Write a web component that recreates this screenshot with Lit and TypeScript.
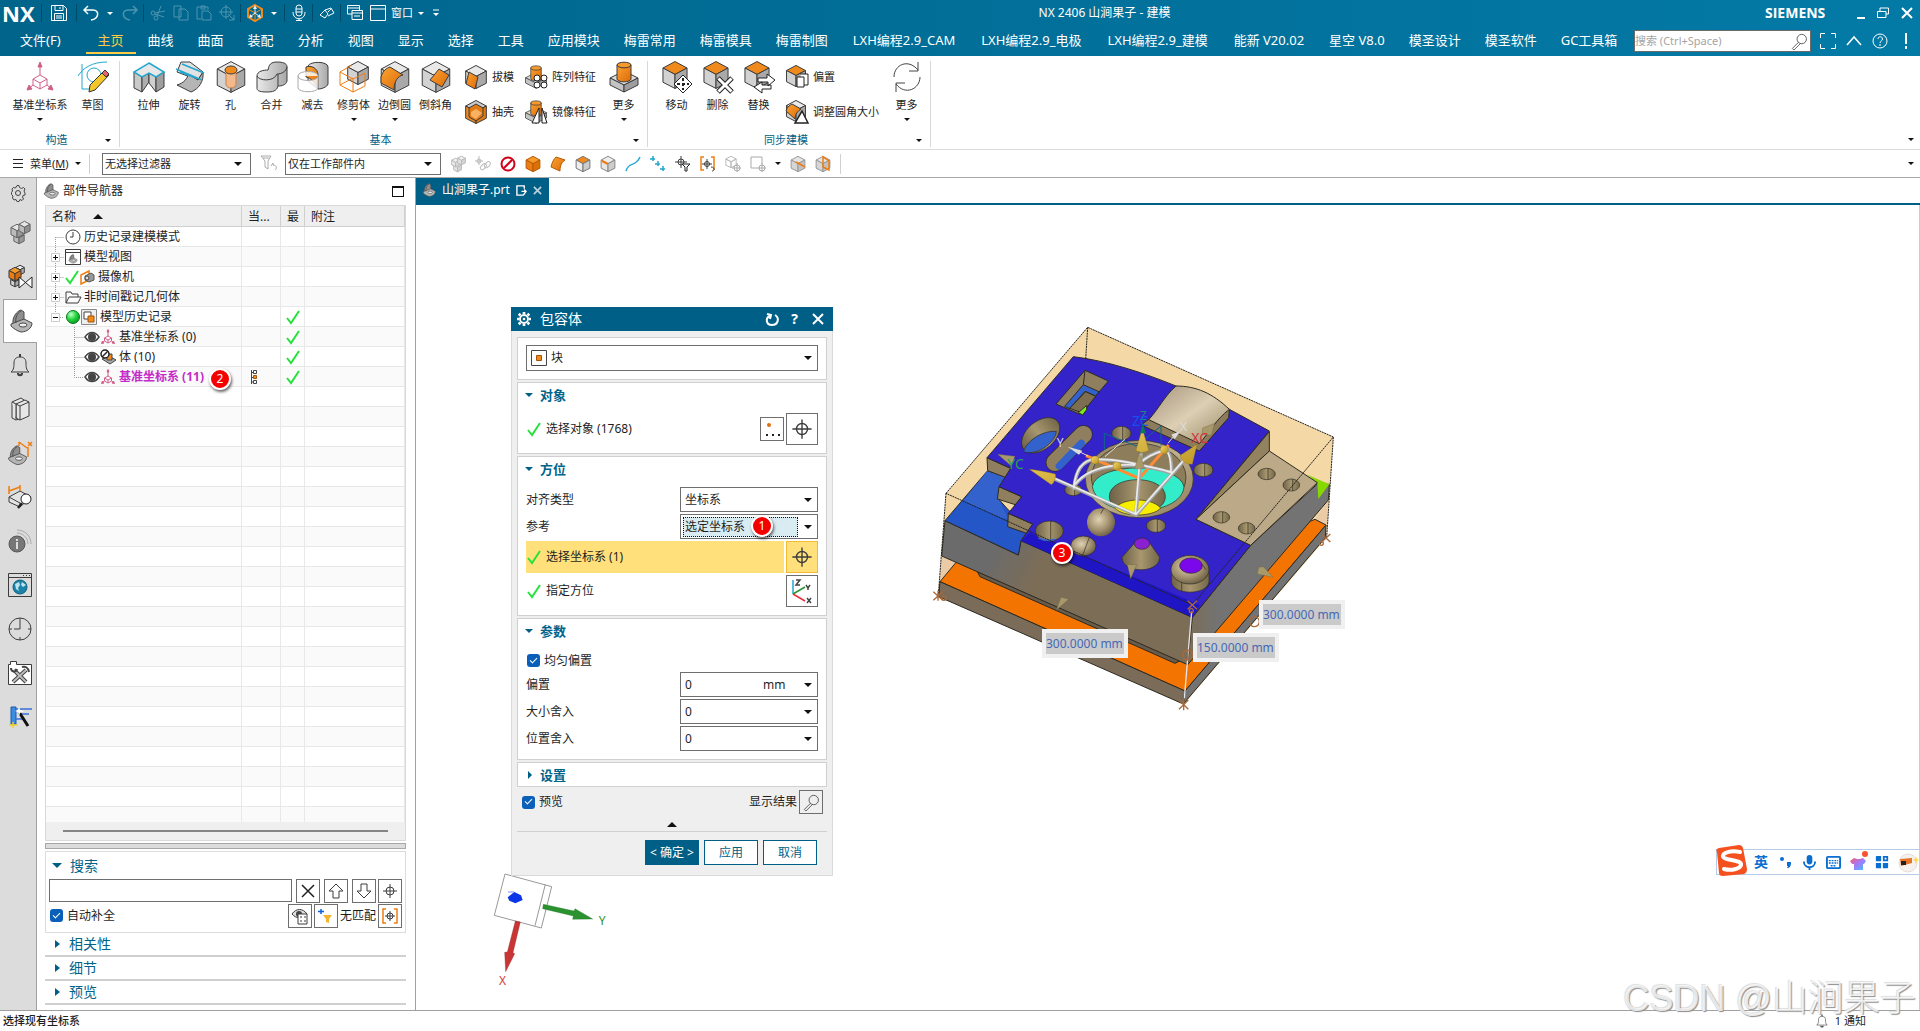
import { LitElement, html, svg, css, nothing } from "lit";
import { customElement } from "lit/decorators.js";
import { classMap } from "lit/directives/class-map.js";

const INK = "#3c3c3c";
const OR = "url(#orange)";
const GR = "url(#grey)";

/** Isometric cube in a box of side s whose top-left corner is x, y. */
const cube = (x: number, y: number, s: number, top = "#e9e9e9", left = "#d2d2d2", right = "#a9a9a9", line = INK) => {
  const p = (a: number, b: number) => `${x + a * s},${y + b * s}`;
  return svg`<g stroke=${line} stroke-linejoin="round">
    <polygon fill=${top} points="${p(0.5, 0.02)} ${p(0.93, 0.25)} ${p(0.5, 0.48)} ${p(0.07, 0.25)}"/>
    <polygon fill=${left} points="${p(0.07, 0.25)} ${p(0.5, 0.48)} ${p(0.5, 0.98)} ${p(0.07, 0.76)}"/>
    <polygon fill=${right} points="${p(0.93, 0.25)} ${p(0.5, 0.48)} ${p(0.5, 0.98)} ${p(0.93, 0.76)}"/></g>`;
};
const ico = (size: number, body: unknown, box = size) =>
  html`<svg class="ico" width=${size} height=${size} viewBox="0 0 ${box} ${box}" fill="none" aria-hidden="true">${body}</svg>`;

const csys = svg`<g stroke="#d0608a" fill="none"><path d="M16 4V14M16 14l7 4v6l-7 4-7-4v-6zM9 18l7 4 7-4M16 22v6M9 24l-5 4M23 24l5 4"/><path fill="#d0608a" d="M16 1l2 5h-4zM3 29l2-5 3 4zM29 29l-2-5-3 4z"/></g>`;
const part = svg`<g stroke="#4a4a4a" stroke-linejoin="round"><path fill="#8f8f8f" d="M4 15C3 8 8 2 12 1l3 2v8l-6 8z"/><path fill="#b5b5b5" d="M2 15l13-5 8 4c0 5-5 9-11 9-4-1-8-4-10-6z"/><ellipse cx="14" cy="16" rx="4" ry="2" fill="#efefef"/><path d="M12 2c-4 2-6 7-5 12"/></g>`;
const target = svg`<g stroke=${INK}><circle cx="8" cy="8" r="4"/><path d="M8 1v14M1 8h14"/></g>`;
const cyl = (x: number, y: number, w: number, h: number) => svg`<g stroke=${INK}><path fill=${OR} d="M${x} ${y}v${h}a${w / 2} ${w / 5} 0 0 0 ${w} 0v-${h}z"/><ellipse fill="#f79a2a" cx=${x + w / 2} cy=${y} rx=${w / 2} ry=${w / 5}/></g>`;
const post = svg`<g stroke=${INK} stroke-linejoin="round"><path fill="#dadada" d="M2 17l14-7 14 7-14 7z"/><path fill="#c4c4c4" d="M2 17l14 7v7L2 24z"/><path fill="#9e9e9e" d="M30 17l-14 7v7l14-7z"/></g>${cyl(9, 4, 14, 14)}`;
const lens = svg`<g stroke=${INK}><circle cx="15" cy="9" r="6"/><path d="M11 13l-8 8 2 2 8-8"/></g>`;
const bell = svg`<g stroke=${INK}><path d="M3 19c3-2 3-6 3-9 0-4 2-6 6-6s6 2 6 6c0 3 0 7 3 9z"/><path d="M10 20c0 3 4 3 4 0M12 1v3" stroke-width="2"/></g>`;

const big: Record<string, unknown> = {
  csys,
  sketch: svg`<g stroke="#22a7cf"><path d="M5 3v25M5 28h14M1 15C6 7 15 1 30 1"/><circle cx="17" cy="14" r="7"/></g><path fill="#f3c62b" stroke="#333" d="M12 31l1-7L27 10l5 4-14 15z"/><path fill="#e8636b" stroke="#333" d="M25 12l3-3 4 4-3 3z"/>`,
  extrude: svg`<g stroke=${INK} stroke-linejoin="round"><path fill="#c9c9c9" d="M1 11l8 5v15l-8-4z"/><path fill="#aeaeae" d="M9 16l7-4v9l-7 10z"/><path fill="#cfcfcf" d="M16 12l7 4v15l-7-9z"/><path fill="#9f9f9f" d="M23 16l8-5v15l-8 5z"/></g><path fill="#e8e8e8" stroke="#22a7cf" stroke-width="1.5" d="M16 2l15 9-8 5-7-4-7 4-8-5z"/>`,
  revolve: svg`<g stroke=${INK}><path fill="#e2e2e2" d="M7 1h9l13 10-5 8L3 11z"/><path fill="#b5b5b5" d="M29 11c1 9-4 17-12 20L3 24c7-2 11-7 11-11l10 6z"/></g><path stroke="#22a7cf" d="M2 8l26 11M8 3l22 9M6 11l16 6" stroke-width="1.5"/>`,
  hole: svg`${cube(0, 0, 32)}<path fill="#f2b98a" stroke="#cd7f45" d="M11 10v14c2 4 8 4 10 0V10z"/><ellipse cx="16" cy="9" rx="6" ry="4" fill="#f08a1d" stroke=${INK}/>`,
  unite: svg`<path fill=${GR} stroke=${INK} d="M1 15c0-5 7-6 11-6 1-2 0-8 9-8s10 3 10 5v14c-1 4-5 5-9 5-1 3-2 6-11 6S1 29 1 27z"/><path stroke=${INK} d="M1 15c2 5 17 6 20-2 4 0 9-2 10-7M22 13v12"/>`,
  subtract: svg`<path fill=${GR} stroke=${INK} d="M11 5c2-5 20-5 20 1v17c-1 3-6 5-10 5l-10-8z"/><path fill=${OR} stroke=${INK} d="M9 6c5-2 12 1 12 8v14c-2-6-7-11-12-12z"/><path fill="#fff" fill-opacity=".8" stroke="#aaa" d="M1 15c0-6 20-6 20 0v12c-1 5-19 5-20 0zM1 15c0 6 20 6 20 0"/>`,
  trim: svg`${cube(8, 0, 24)}<g stroke="#ee7d11"><path d="M2 11l13 7v13L2 24zM15 18l12-6M2 11l12-7M15 31l12-6V13M2 24l13-7" /></g>`,
  blend: svg`${cube(0, 0, 32)}<path fill=${OR} stroke=${INK} d="M2 16c2-7 6-9 9-10l13 8c-5 1-9 6-9 15L2 22z"/>`,
  chamfer: svg`${cube(0, 0, 32)}<path fill=${OR} stroke=${INK} d="M19 8l10 6-7 12-12-7z"/>`,
  more: post,
  move: svg`${cube(0, 0, 28, "#f08a1d")}<path fill="#fff" stroke="#222" d="M22 14l9 9-9 9-9-9z"/><path stroke="#222" stroke-width="2" stroke-dasharray="3 2" d="M22 17v12M16 23h12"/>`,
  remove: svg`${cube(0, 0, 28, "#f08a1d")}<path stroke="#222" stroke-width="5" d="M16 17l14 14M30 17L16 31"/><path stroke="#fff" stroke-width="3" d="M16.500 17.500l13 13M29.500 17.500l-13 13"/>`,
  replace: svg`${cube(0, 0, 28, "#f08a1d")}<path fill="#fff" stroke="#222" d="M15 17h9v-4l8 6-7 6v-4h-10zM28 24h-9v-3l-8 5 8 6v-4h9z"/>`,
  cycle: svg`<g stroke="#444"><path d="M3 16C3 4 17-3 27 9M29 16c0 12-15 19-24 7"/><path d="M27 1v9h-9M5 31v-9h9"/></g>`,
};
const mid: Record<string, unknown> = {
  draft: svg`${cube(0, 0, 24)}<path fill=${OR} stroke=${INK} d="M5 7l9 5-3 12-9-5z"/>`,
  shell: svg`${cube(0, 0, 24, "#c9c9c9", "#ef8a1f", "#e07a12")}<path fill="#e27a14" stroke=${INK} d="M12 4l7 4v8l-7 5-7-4V8z"/><path fill="#f9b263" d="M7 12l5-3 6 4-6 6-5-3z"/>`,
  pattern: svg`<g transform="scale(.75)">${post}</g><g fill="#fff" stroke="#222"><circle cx="13" cy="13" r="3"/><circle cx="20" cy="13" r="3"/><circle cx="13" cy="20" r="3"/><circle cx="20" cy="20" r="3"/></g>`,
  mirror: svg`<g transform="scale(.75)">${post}</g><path fill="#fff" stroke="#222" d="M15 8v15H8zM18 8v15h5z"/>`,
  offset: svg`${cube(0, 0, 22, "#f08a1d")}<path fill="#fff" stroke="#222" d="M12 12h7v10h-7zM15 9h8v11h-4"/>`,
  resize: svg`${cube(0, 0, 22)}<path fill=${OR} stroke=${INK} d="M1 11c1-4 4-6 6-7l9 5c-3 2-6 5-6 10z"/><path fill="#fff" stroke="#222" stroke-width="1.500" d="M17 11l6 12H10z"/>`,
};
const rail: { id: string; label: string; art: unknown; on?: boolean }[] = [
  { id: "asm", label: "装配导航器", art: svg`${cube(5, 11, 12, "#ddd", "#bbb", "#999", "#666")}${cube(2, 3, 14, "#e6e6e6", "#bbb", "#999", "#666")}${cube(10, 0, 13, "#e6e6e6", "#bbb", "#8f8f8f", "#666")}` },
  { id: "con", label: "约束导航器", art: svg`${cube(7, 0, 10)}${cube(2, 12, 10)}${cube(0, 2, 14, "#f79a2a", "#ee7d11", "#d56c08")}<path fill="#fff" stroke="#222" d="M11 12v11l13-11v11z"/>` },
  { id: "part", label: "部件导航器", art: part, on: true },
  { id: "bell", label: "通知", art: bell },
  { id: "lib", label: "重用库", art: svg`<g stroke=${INK} fill="#e6e6e6"><path d="M4 5l9-4 3 2v17l-8 3-4-2z"/><path d="M8 7l9-4 4 2v14l-9 4-4-2z"/><path d="M12 9l9-4M12 9v14M8 7l4 2M4 5l4 2v15"/></g>` },
  { id: "mbd", label: "MBD 导航器", art: svg`<g transform="translate(-1 4) scale(.85)">${part}</g><path stroke="#ee7d11" stroke-width="1.500" d="M11 1l8 6M11 1v4M20 6v10M20 1l4 4M24 1l-4 4"/>` },
  { id: "hd3d", label: "HD3D 工具", art: svg`<path fill="#e3e3e3" stroke=${INK} d="M1 12l11-6 11 6-11 10L1 17zM1 12l11 6M12 18v4"/><path stroke="#ee7d11" stroke-width="1.500" d="M1 1v8M12 0v6M1 6l11-4"/><circle cx="18" cy="14" r="5" fill="#fff" stroke="#222"/><path stroke="#222" stroke-width="2.500" d="M14 18l-4 5"/>` },
  { id: "info", label: "信息", art: svg`<g stroke="#aaa"><path d="M9 1c8 0 14 6 14 14M9 4c6 0 11 5 11 11"/></g><circle cx="9" cy="15" r="8" fill="#777" stroke="#555"/><path stroke="#fff" stroke-width="1.500" d="M9 10v2M9 13v7"/>` },
  { id: "web", label: "Web 浏览器", art: svg`<path stroke=${INK} d="M.5.5h23v23H.5zM.5 4.500h23"/><path stroke=${INK} stroke-dasharray="1 2" d="M15 2.500h7"/><circle cx="12" cy="14" r="7" fill="#1b83a8" stroke="#0d5e7c"/><path fill="#bfe3ee" d="M7 11l4-2 1 3-2 3 1 3-3-2zM14 9l4 3-3 2-2-2z"/>` },
  { id: "hist", label: "历史记录", art: svg`<g stroke=${INK}><circle cx="12" cy="12" r="11"/><path d="M12 4v8H6M12 1v3M12 20v3M1 12h3M20 12h3"/></g>` },
  { id: "tools", label: "加工向导", art: svg`<path fill="#fff" stroke=${INK} d="M.5 3.500h2v-3h6v3h15v20H.5z"/><g stroke="#444" stroke-width="4"><path d="M6 9l12 12M18 9L5 21"/></g><g stroke="#bbb" stroke-width="2"><path d="M6 9l12 12M18 9L5 21"/></g><path stroke="#444" stroke-width="2" d="M3 7c0 4 5 5 6 1M14 6c3-1 6 0 7 5"/>` },
  { id: "wand", label: "向导", art: svg`<path fill="#3b8de0" stroke="#2159b0" d="M3 2h5v17H3z"/><path stroke="#3b6fd8" stroke-width="1.500" d="M8 4h16M12 9h9M8 14h8"/><path stroke="#111" stroke-width="3" d="M11 7l9 14"/><path stroke="#f2cf2c" stroke-width="1.500" d="M1 20h9M5 17v6"/><path fill="#fff" d="M11 1l1 4 4 1-4 2-1 3-1-4-3-1 3-1z"/>` },
];

const mini: Record<string, unknown> = {
  asm: svg`${cube(3, 7, 9, "#eee", "#e4e4e4", "#d4d4d4", "#bbb")}${cube(1, 2, 9, "#f2f2f2", "#e8e8e8", "#d8d8d8", "#bbb")}${cube(7, 0, 9, "#f2f2f2", "#e4e4e4", "#d4d4d4", "#bbb")}`,
  link: svg`<g stroke="#bbb"><circle cx="4" cy="5" r="2"/><path d="M4 0v9M0 5h8"/><rect x="5" y="9" width="7" height="4" rx="2" transform="rotate(-45 8 11)"/><rect x="9" y="7" width="7" height="4" rx="2" transform="rotate(-45 12 9)"/></g>`,
  ban: svg`<circle cx="8" cy="8" r="6.500" stroke="#d0021b" stroke-width="2"/><path stroke="#d0021b" stroke-width="2" d="M4 12l8-8"/>`,
  solid: cube(0, 0, 16, "#f79a2a", "#ee7d11", "#de7008", "#b65a05"),
  sheet: svg`<path fill=${OR} stroke="#b65a05" d="M6 1l9 3c-3 2-5 5-5 11l-9-4C2 6 4 3 6 1z"/>`,
  face: cube(0, 0, 16, "#f08a1d", "#eee", "#ccc", "#777"),
  edge: svg`${cube(0, 0, 16, "#eee", "#e6e6e6", "#ccc", "#888")}<path stroke="#ee7d11" stroke-width="2" d="M2 5l6 3"/>`,
  curve: svg`<path stroke="#22a7cf" stroke-width="1.500" d="M1 15C4 5 10 12 15 1"/>`,
  points: svg`<path stroke="#22a7cf" stroke-width="1.500" d="M3 0v5M0 3h5M8 5v5M5 8h5M13 10v5M10 13h5"/>`,
  filt: svg`<g stroke=${INK}><circle cx="6" cy="6" r="3"/><path d="M6 0v12M0 6h12"/></g><path fill="#fff" stroke="#222" d="M7 8h8l-3 3v4h-2v-4z"/>`,
  brack: svg`<path stroke="#ee7d11" stroke-width="1.500" d="M4 1H1v13h3M11 1h3v13"/><g stroke=${INK}><circle cx="7" cy="8" r="2.500"/><path d="M7 3v10M2 8h10M11 11c4 0 4 4 1 4"/></g>`,
  gcube: svg`${cube(0, 0, 12, "none", "none", "none", "#bbb")}<g stroke="#aaa"><circle cx="12" cy="12" r="3"/><path d="M12 7v9M7 12h9"/></g>`,
  grect: svg`<g stroke="#aaa"><path d="M1 1h11v7M1 1v11h6"/><circle cx="12" cy="12" r="3"/><path d="M12 7v9M7 12h9"/></g>`,
  plane: svg`${cube(0, 0, 16, "#e4e4e4", "#d6d6d6", "#c2c2c2", "#999")}<path stroke="#ee7d11" stroke-width="1.500" d="M6 6l9 5"/>`,
  sect: svg`${cube(0, 0, 16, "#e4e4e4", "#d6d6d6", "#c2c2c2", "#999")}<path stroke="#ee7d11" stroke-width="1.500" d="M8 1v10l6 3V5z"/>`,
};
const miniOrder: [string, string][] = [
  ["asm", "装配"], ["link", "链接"], ["ban", "清除"], ["solid", "实体"], ["sheet", "片体"], ["face", "面"], ["edge", "边"],
  ["curve", "曲线"], ["points", "点"], ["filt", "过滤"], ["brack", "选择范围"], ["gcube", "体选择"], ["grect", "矩形选择"],
];

const check = html`<svg class="ico" width="14" height="14" viewBox="0 0 14 14" fill="none" role="img" aria-label="完成"><path d="M1 8l4 5L13 1" stroke="#27e13c" stroke-width="2"/></svg>`;
const eye = ico(16, svg`<path stroke="#444" stroke-width="1.500" fill="#fff" d="M1 8c4-6 10-6 14 0-4 6-10 6-14 0z"/><circle cx="8" cy="8" r="4" fill="#444"/>`);
const treeIcons: Record<string, unknown> = {
  clock: svg`<g stroke=${INK}><circle cx="8" cy="8" r="7"/><path d="M8 3v5H5"/></g>`,
  view: svg`<path stroke=${INK} fill="#fff" d="M.5.5h15v15H.5zM.5 3.500h15"/><g transform="translate(3 5) scale(.4)">${part}</g>`,
  camera: svg`<path stroke="#ee7d11" stroke-width="1.500" d="M2 6l8-4v9l-8 4z"/><path fill="#999" stroke="#555" d="M6 7l6-3 3 2v5l-5 2-4-2z"/><circle cx="8" cy="9" r="2" fill="#ddd" stroke="#444"/>`,
  folder: svg`<path stroke=${INK} d="M1 14V3h5l1 2h6v3M1 14l3-6h12l-3 6z"/>`,
  group: svg`<path stroke="#888" fill="#eee" d="M.5.5h15v15H.5z"/><path stroke="#444" fill="#fff" d="M3 3h7v7H3z"/><path fill="#f08a1d" stroke="#a55304" d="M7 7h6v6H7z"/>`,
  csys: svg`<g transform="scale(.5)" stroke-width="2">${csys}</g>`,
  body: svg`<path fill="#aaa" stroke="#444" d="M2 10l7-3 7 4-6 4z"/><path fill="#f08a1d" stroke="#444" d="M7 5h5v6H7z"/><circle cx="5" cy="5" r="4" fill="#fff" stroke="#222" stroke-width="1.500"/><path stroke="#222" stroke-width="1.500" d="M2 8l6-6"/>`,
  ball: svg`<circle cx="8" cy="8" r="6.500" fill="url(#ball)" stroke="#0a7a1c"/>`,
};

interface TreeRow { text: string; icons: string[]; child?: boolean; box?: "+" | "-"; done?: boolean; active?: boolean }
const tree: TreeRow[] = [
  { text: "历史记录建模模式", icons: ["clock"] },
  { text: "模型视图", icons: ["view"], box: "+" },
  { text: "摄像机", icons: ["check", "camera"], box: "+" },
  { text: "非时间戳记几何体", icons: ["folder"], box: "+" },
  { text: "模型历史记录", icons: ["ball", "group"], box: "-", done: true },
  { text: "基准坐标系 (0)", icons: ["csys"], child: true, done: true },
  { text: "体 (10)", icons: ["body"], child: true, done: true },
  { text: "基准坐标系 (11)", icons: ["csys"], child: true, done: true, active: true },
];

const menus = ["文件(F)", "主页", "曲线", "曲面", "装配", "分析", "视图", "显示", "选择", "工具", "应用模块", "梅雷常用", "梅雷模具", "梅雷制图",
  "LXH编程2.9_CAM", "LXH编程2.9_电极", "LXH编程2.9_建模", "能新 V20.02", "星空 V8.0", "模圣设计", "模圣软件", "GC工具箱"];
const isAddOn = (name: string) => /^LXH|^能新/.test(name);

@customElement("app-root")
export class AppRoot extends LitElement {
  static styles = css`
    :host { display: block; font: 12px/16px "Noto Sans", "Noto Sans CJK SC", sans-serif; color: #1e1e1e; }
    * { box-sizing: border-box; }
    button, input, select { font: inherit; color: inherit; margin: 0; padding: 0; border: 0; background: none; border-radius: 0; appearance: none; }
    button, a { cursor: pointer; }
    a { color: inherit; text-decoration: none; }
    .ico { display: block; flex: none; overflow: visible; }
    .defs { position: absolute; width: 0; height: 0; }
    .app { position: relative; display: flex; flex-direction: column; min-height: 100vh; background: #fff; white-space: nowrap; overflow: hidden; }
    .caret { width: 0; height: 0; border: 4px solid transparent; border-top-color: #111; border-bottom: 0; flex: none; }
    .caret.small { border-width: 3px; border-bottom: 0; }
    .caret.white { border-top-color: #fff; }

    .banner { background: linear-gradient(90deg, #00648b, #037aa6); color: #fff; height: 56px; }
    .titlebar { display: flex; align-items: center; height: 26px; }
    .quick { display: flex; align-items: center; padding-left: 2px; }
    .brand { font: bold 22px/24px "Open Sans", sans-serif; width: 37px; }
    .quick button { display: flex; align-items: center; justify-content: center; width: 23px; height: 22px; }
    .quick .save { width: 30px; }
    .quick .drop { width: 16px; }
    .quick .win { width: auto; gap: 5px; font-size: 11px; padding: 0 4px; }
    .quick .off { opacity: 0.3; }
    .vbar { width: 1px; height: 18px; background: #004a69; margin: 0 2px; }
    .title { flex: 1; text-align: center; }
    .corner { display: flex; align-items: center; gap: 12px; padding-right: 7px; }
    .siemens { font: bold 14px/16px "Open Sans", sans-serif; width: 80px; }
    .menubar { display: flex; align-items: stretch; height: 30px; padding-left: 8px; font-size: 13px; }
    .menubar a { display: flex; align-items: center; padding: 2px 12px 0; height: 28px; border-bottom: 2px solid transparent; }
    .menubar a.file { margin-right: 13px; }
    .menubar a.addon { padding: 2px 13px 0; }
    .menubar a.on { color: #ffcb47; border-color: #ffcb47; }
    .finder { display: flex; align-items: center; margin: 4px 9px 4px auto; width: 177px; height: 22px; background: #fff; border: 1px solid #6b6b6b; padding-right: 2px; }
    .finder input { flex: 1; min-width: 0; font-size: 11px; color: #222; }
    .finder input::placeholder { color: #a5a5a5; opacity: 1; }
    .helpers { display: flex; align-items: center; gap: 10px; padding-right: 6px; }

    .ribbon { display: flex; height: 94px; padding: 5px 0 2px; border-bottom: 1px solid #dcdcdc; font-size: 11px; position: relative; }
    .group { display: flex; flex-direction: column; border-right: 1px solid #d8d8d8; padding-left: 8px; }
    .tools { display: flex; flex: 1; padding-right: 3px; }
    .tools.start { padding-right: 6px; }
    .big { display: flex; flex-direction: column; align-items: center; width: 41px; gap: 4px; height: 68px; }
    .big.wide { width: 64px; }
    .big .caret { margin-top: 1px; }
    .stack { display: flex; flex-direction: column; gap: 11px; padding: 4px 4px 0 6px; }
    .stack + .big { margin-left: 3px; }
    .stack.lead { padding-left: 8px; }
    .stack button { display: flex; align-items: center; gap: 4px; height: 24px; }
    .gname { display: flex; align-items: center; color: #005f87; height: 14px; }
    .gname span { flex: 1; text-align: center; }
    .gname .caret { margin-right: 8px; }
    .tail { position: absolute; right: 6px; bottom: 8px; }

    .selbar { display: flex; align-items: center; height: 28px; border-bottom: 1px solid #a8a8a8; font-size: 11px; padding: 0 6px 0 12px; }
    .menu { display: flex; align-items: center; gap: 6px; width: 77px; }
    .split { width: 1px; height: 20px; background: #d0d0d0; }
    .combo { display: grid; align-items: center; border: 1px solid #6e6e6e; background: #fff; grid-template-columns: 1fr 16px; }
    .combo > select, .combo > .inner { grid-area: 1 / 1 / 2 / 3; width: 100%; height: 100%; padding-left: 4px; }
    .combo > .caret { grid-area: 1 / 2 / 2 / 3; pointer-events: none; }
    .selbar .combo { height: 22px; }
    .selbar .combo select { padding-left: 2px; }
    .c1 { width: 149px; margin-left: 12px; }
    .c2 { width: 156px; margin-left: 8px; }
    .reset { margin-left: 9px; }
    .minis { display: flex; gap: 9px; margin-left: 9px; align-items: center; flex: 1; }

    .work { display: flex; flex: 1; min-height: 0; }
    .rail { width: 37px; background: #dcdcdc; border-right: 1px solid #a0a0a0; display: flex; flex-direction: column; flex: none; }
    .rail button { display: flex; align-items: center; justify-content: center; height: 44px; padding-left: 3px; }
    .rail button.gear { height: 33px; padding: 0 0 3px; }
    .rail button.on { background: #fff; border: 1px solid #a0a0a0; border-right: 0; margin: 0 -1px 0 3px; padding: 0; }
    .panel { width: 379px; flex: none; display: flex; flex-direction: column; padding: 0 9px 5px 8px; border-right: 1px solid #a0a0a0; }
    .phead { display: flex; align-items: center; height: 27px; gap: 4px; margin-left: -2px; padding-bottom: 1px; }
    .phead h2 { font: inherit; margin: 0; flex: 1; }
    .max { width: 12px; height: 11px; border: 2px solid #111; border-width: 2px 1px 1px; margin-right: 2px; }
    .grid { flex: 1; min-height: 0; border: 1px solid #d9d9d9; height: 636px; display: flex; flex-direction: column; }
    .rows { flex: 1 1 0; min-height: 0; overflow: hidden; }
    table { width: 100%; border-spacing: 0; table-layout: fixed; }
    th { font-weight: normal; text-align: left; background: #efefef; border: 1px solid #d0d0d0; border-width: 0 1px 1px 0; height: 21px; padding: 1px 0 0 6px; }
    td { height: 20px; padding: 0; border: 1px solid #e8e8e8; border-width: 0 1px 1px 0; }
    tbody tr:nth-child(even) td { background: #fafafa; }
    .up { display: inline-block; border: 5px solid transparent; border-bottom: 5px solid #111; border-top: 0; margin-left: 14px; vertical-align: 2px; }
    .node { display: flex; align-items: center; height: 19px; position: relative; }
    .node .label { padding-left: 3px; }
    .node.active .label { color: #c42ac8; font-weight: bold; }
    .cell { display: flex; justify-content: center; }
    .cell.left { justify-content: flex-start; padding-left: 8px; }
    .badge { display: flex; align-items: center; justify-content: center; width: 22px; height: 22px; border-radius: 50%; border: 2px solid #fff; background: #f40000; color: #fff; font-size: 12px; box-shadow: 1px 2px 3px #0009; position: absolute; z-index: 2; pointer-events: none; }
    .node .badge { left: 163px; top: 1px; }
    .hscroll { height: 18px; background: #efefef; display: flex; align-items: center; padding: 0 17px; }
    .thumb { height: 2px; background: #858585; flex: 1; }
    .splitter { height: 6px; margin: 2px 0; background: #dcdcdc; border: 1px solid #a8a8a8; }
    .search { border: 1px solid #dcdcdc; padding: 1px 3px 3px; height: 82px; }
    .fold { display: flex; align-items: center; gap: 8px; height: 24px; width: 100%; font-size: 14px; color: #00638a; padding-left: 6px; }
    .search .fold { padding-left: 3px; height: 25px; }
    .tri { border: 5px solid transparent; border-top-color: #005f87; border-bottom: 0; margin: 0; }
    .tri.side { border: 4px solid transparent; border-left: 5px solid #005f87; border-right: 0; margin: 0 1px 0 4px; }
    .line { display: flex; align-items: center; height: 25px; }
    .line .q { flex: 1; height: 23px; border: 1px solid #6e6e6e; margin-right: 4px; min-width: 0; }
    .sq { display: flex; align-items: center; justify-content: center; width: 24px; height: 24px; border: 1px solid #6e6e6e; flex: none; background: #fff; }
    .sq.clear { background: none; }
    .gap4 { margin-right: 4px; }
    .gap2 { margin-right: 2px; }
    .tick { display: flex; align-items: center; gap: 4px; flex: 1; }
    .tick input { width: 13px; height: 13px; border-radius: 3px; background: #0a5fb8; display: grid; place-items: center; flex: none; }
    .tick input::before { content: ""; width: 6px; height: 3px; border: solid #fff; border-width: 0 0 1px 1px; transform: rotate(-45deg) translate(1px, -1px); }
    .search .tick { padding-left: 1px; }
    .more { border-bottom: 2px solid #d0d0d0; }

    .stage { flex: 1; min-width: 0; display: flex; flex-direction: column; }
    .tabs { display: flex; height: 27px; border-bottom: 2px solid #005f87; }
    .tab { display: flex; align-items: center; gap: 6px; background: #005f87; color: #fff; padding: 0 7px 1px 6px; height: 25px; }
    .canvas { flex: 1; position: relative; border-right: 1px solid #ccc; }
    .model { position: absolute; left: 504px; top: 105px; overflow: visible; }
    .triad { position: absolute; left: 54px; top: 655px; overflow: visible; }
    .dim { position: absolute; padding: 4px; background: #f0f0f0; }
    .dim input { display: block; width: 78px; height: 21px; background: #cacaca; color: #4668b4; }
    .d1 { left: 626px; top: 424px; }
    .d2 { left: 777px; top: 428px; }
    .d3 { left: 843px; top: 395px; }
    .b3 { left: 635px; top: 337px; }

    .dialog { position: absolute; left: 95px; top: 102px; width: 322px; background: #efefef; border: 1px solid #dadada; border-top: 0; z-index: 1; }
    .dtitle { display: flex; align-items: center; gap: 9px; height: 24px; background: #005f87; color: #fff; padding: 0 9px 0 6px; margin: 0 -1px; font-size: 14px; }
    .dtitle h2 { font: inherit; margin: 0; flex: 1; }
    .dtitle button { display: flex; margin-left: 3px; }
    .dtitle button:last-child { margin-left: 5px; }
    .dbody { display: flex; flex-direction: column; gap: 2px; padding: 6px 5px 10px; }
    .sec { background: #fff; border: 1px solid #d0d0d0; padding: 0 8px; }
    .sec.top { padding: 7px 8px 8px; }
    .sec.pad { padding-bottom: 6px; }
    .sec h3 { margin: 0 0 7px; font: bold 13px/16px "Noto Sans", "Noto Sans CJK SC", sans-serif; }
    .sec h3.shut { margin: 0; }
    .sec h3 button { display: flex; align-items: center; gap: 7px; color: #00638a; height: 23px; font-weight: bold; }
    .sec .tri { border-width: 4px; border-bottom: 0; margin-left: -1px; }
    .sec .tri.side { border: 4px solid transparent; border-left: 4px solid #005f87; border-right: 0; margin: 0 1px 0 2px; }
    .row { display: flex; align-items: center; height: 27px; padding-bottom: 2px; }
    .row > label.name { width: 154px; }
    .row .combo { flex: 1; height: 25px; }
    .row.chk { height: 23px; padding: 0 0 0 1px; }
    .row.pick { height: 34px; }
    .pick .what { display: flex; align-items: center; gap: 5px; flex: 1; height: 32px; padding-left: 1px; margin-right: 2px; }
    .pick.hot .what { background: #ffe07a; }
    .pick .sq { width: 32px; height: 32px; }
    .pick .sq.sm { width: 24px; height: 24px; margin-right: 2px; }
    .pick.hot .sq { background: #ffe07a; border-color: #f5bb2e; }
    .combo.kind { height: 26px; grid-template-columns: 26px 1fr 16px; }
    .combo.kind > select { grid-area: 1 / 1 / 2 / 4; padding-left: 24px; }
    .combo.kind > .ico { grid-area: 1 / 1 / 2 / 2; margin-left: 4px; pointer-events: none; }
    .combo.kind > .caret { grid-area: 1 / 3 / 2 / 4; margin-left: 3px; }
    .row .combo > .caret { margin-left: 3px; }
    .combo.focus > select { width: 115px; height: 20px; margin-left: 2px; padding-left: 1px; background: #d9ecf1; border: 1px dotted #111; }
    .rel { position: relative; }
    .b1 { left: 225px; top: 1px; }
    .inner { display: flex; align-items: center; }
    .inner input { width: 78px; }
    .foot { display: flex; align-items: center; height: 26px; padding: 0 4px 0 5px; gap: 2px; }
    .fold-up { display: flex; justify-content: center; align-items: flex-end; height: 10px; border: 0; width: 100%; }
    .fold-up .up { margin: 0; vertical-align: 0; }
    .actions { display: flex; justify-content: flex-end; gap: 5px; border-top: 1px solid #d0d0d0; padding: 8px 10px 0 0; margin-top: 2px; }
    .actions button { width: 54px; height: 25px; border: 1px solid #005f87; background: #fff; color: #005f87; }
    .actions .ok { background: #005f87; color: #fff; }

    .ime { position: absolute; right: 0; top: 644px; display: flex; align-items: center; gap: 9px; height: 26px; border: 1px solid #b6cbe6; border-right: 0; padding: 0 1px 0 37px; background: #fff; }
    .ime .logo { position: absolute; left: -2px; top: -5px; }
    .ime b { color: #0a6ed1; font-size: 14px; line-height: 20px; margin-right: 2px; }
    .status { display: flex; align-items: center; height: 21px; border-top: 1px solid #a0a0a0; font-size: 11px; font-weight: 500; padding: 0 54px 0 3px; }
    .status .msg { flex: 1; }
    .status button { display: flex; align-items: center; gap: 6px; font-weight: 400; }
    .mark { position: absolute; right: 4px; bottom: 8px; font: 300 36px/48px "Liberation Sans", "Noto Sans CJK SC", sans-serif; color: #fffc; text-shadow: 1px 1px 1px #8c8c8c, -1px -1px 1px #ddd; pointer-events: none; }
  `;

  private bigBtn(id: string, label: string, opts: { drop?: boolean; wide?: boolean } = {}) {
    return html`<button class=${classMap({ big: true, wide: !!opts.wide })}>${ico(32, big[id])}<span>${label}</span>
      ${opts.drop ? html`<i class="caret small"></i>` : nothing}</button>`;
  }

  private smallBtn(id: string, label: string) {
    return html`<button>${ico(24, mid[id])}<span>${label}</span></button>`;
  }

  private renderBanner() {
    const w = "#fff";
    return html`<header class="banner">
      <div class="titlebar">
        <div class="quick">
          <span class="brand">NX</span><i class="vbar"></i>
          <button class="save" aria-label="保存">${ico(16, svg`<path stroke=${w} d="M.5.5h12l3 3v12H.5zM4 .5v5h8v-5M3.500 15V8.500h9V15M5 11h6M5 13h6M9 2v2"/>`)}</button><i class="vbar"></i>
          <button aria-label="撤消">${ico(16, svg`<path stroke=${w} stroke-width="1.500" d="M5 1L1 5l4 4M1 5h9c7 0 6 9-2 10"/>`)}</button>
          <button class="drop" aria-label="撤消列表"><i class="caret small white"></i></button>
          <button class="off" aria-label="重做">${ico(16, svg`<path stroke=${w} stroke-width="1.500" d="M11 1l4 4-4 4M15 5H6c-7 0-6 9 2 10"/>`)}</button><i class="vbar"></i>
          <button class="off" aria-label="剪切">${ico(16, svg`<g stroke=${w}><circle cx="3" cy="8" r="2"/><circle cx="6" cy="13" r="2"/><path d="M5 8l10-2M7 11L11 1M5 9l9 3"/></g>`)}</button>
          <button class="off" aria-label="复制">${ico(16, svg`<path stroke=${w} d="M1 1h7v11H1zM6 4h6l3 3v8H6z"/>`)}</button>
          <button class="off" aria-label="粘贴">${ico(16, svg`<path stroke=${w} d="M12 5V2H1v12h4M5 1h4v3H5zM6 6h6l3 3v6H6z"/>`)}</button>
          <button class="off" aria-label="变换">${ico(16, svg`<g stroke=${w}><circle cx="7" cy="7" r="5"/><path d="M7 0v14M0 7h14M9 9l6 6M15 10v5h-5"/></g>`)}</button><i class="vbar"></i>
          <button aria-label="定向视图">${ico(18, svg`<path stroke="#f08a1d" stroke-width="2" d="M9 1l7 4v8l-7 4-7-4V5z"/><path stroke="#f08a1d" d="M2 5l7 4 7-4M9 9v8"/><path stroke="#e8eef0" d="M9 3v6M9 9l-5 4M9 9l5 4"/><path fill="#e8eef0" d="M9 1l2 4H7zM3 14l1-4 3 3zM15 14l-1-4-3 3z"/>`)}</button>
          <button class="drop" aria-label="视图列表"><i class="caret small white"></i></button><i class="vbar"></i>
          <button aria-label="语音">${ico(16, svg`<g stroke=${w}><rect x="5" y="0" width="6" height="11" rx="3"/><path d="M2 7c0 9 12 9 12 0M8 14v2M5 15.500h6M5 4h6M5 7h6"/></g>`)}</button><i class="vbar"></i>
          <button aria-label="触控">${ico(16, svg`<path stroke=${w} d="M1 10l5-5 3 4-3 4zM6 5l6-2 3 5-6 3M9 7l3-3"/>`)}</button><i class="vbar"></i>
          <button aria-label="切换窗口">${ico(16, svg`<path stroke=${w} d="M5 9H.5V.5h12V5M.5 3h12M5 5.500h10.500v9H5zM5 8h10M7 11h6"/>`)}</button>
          <button class="win">${ico(16, svg`<path stroke=${w} d="M.5.5h15v15H.5zM.5 4h15"/>`)}窗口<i class="caret small white"></i></button>
          <button class="drop" aria-label="自定义">${ico(8, svg`<path stroke=${w} d="M1 1h6"/><path fill=${w} d="M1 4h6L4 7z"/>`)}</button>
        </div>
        <div class="title">NX 2406 山涧果子 - 建模</div>
        <div class="corner">
          <span class="siemens">SIEMENS</span>
          <button aria-label="最小化">${ico(8, svg`<path stroke=${w} stroke-width="2" d="M0 9h8"/>`)}</button>
          <button aria-label="还原">${ico(12, svg`<path stroke=${w} d="M3 4V1h8.500v6H9M.5 4.500h8.500v6H.5z"/>`)}</button>
          <button aria-label="关闭">${ico(12, svg`<path stroke=${w} stroke-width="2" d="M1 1l10 10M11 1L1 11"/>`)}</button>
        </div>
      </div>
      <nav class="menubar">
        ${menus.map((m, i) => html`<a href="#" class=${classMap({ on: i === 1, file: i === 0, addon: isAddOn(m) })}>${m}</a>`)}
        <div class="finder"><input type="search" aria-label="搜索" placeholder="搜索 (Ctrl+Space)" />${ico(18, lens, 23)}</div>
        <div class="helpers">
          <button aria-label="全屏">${ico(16, svg`<path stroke=${w} d="M.5 5V.5H5M11 .5h4.500V5M.5 11v4.500H5M11 15.500h4.500V11"/>`)}</button>
          <button aria-label="折叠功能区">${ico(16, svg`<path stroke=${w} stroke-width="1.500" d="M1 12l7-8 7 8"/>`)}</button>
          <button aria-label="帮助">${ico(16, svg`<circle cx="8" cy="8" r="7" stroke=${w}/><path stroke=${w} d="M6 6c0-3 4.500-3 4.500 0C10.500 8 8 8 8 10M8 11v2"/>`)}</button>
          <button aria-label="提醒">${ico(16, svg`<path stroke=${w} stroke-width="2" d="M8 0v11M8 13v3"/>`)}</button>
        </div>
      </nav>
    </header>`;
  }

  private renderRibbon() {
    return html`<section class="ribbon" aria-label="功能区">
      <div class="group">
        <div class="tools start">${this.bigBtn("csys", "基准坐标系", { drop: true, wide: true })}${this.bigBtn("sketch", "草图")}</div>
        <div class="gname"><span>构造</span><i class="caret small"></i></div>
      </div>
      <div class="group">
        <div class="tools">
          ${this.bigBtn("extrude", "拉伸")}${this.bigBtn("revolve", "旋转")}${this.bigBtn("hole", "孔")}${this.bigBtn("unite", "合并")}
          ${this.bigBtn("subtract", "减去")}${this.bigBtn("trim", "修剪体", { drop: true })}${this.bigBtn("blend", "边倒圆", { drop: true })}${this.bigBtn("chamfer", "倒斜角")}
          <div class="stack lead">${this.smallBtn("draft", "拔模")}${this.smallBtn("shell", "抽壳")}</div>
          <div class="stack">${this.smallBtn("pattern", "阵列特征")}${this.smallBtn("mirror", "镜像特征")}</div>
          ${this.bigBtn("more", "更多", { drop: true })}
        </div>
        <div class="gname"><span>基本</span><i class="caret small"></i></div>
      </div>
      <div class="group">
        <div class="tools">
          ${this.bigBtn("move", "移动")}${this.bigBtn("remove", "删除")}${this.bigBtn("replace", "替换")}
          <div class="stack">${this.smallBtn("offset", "偏置")}${this.smallBtn("resize", "调整圆角大小")}</div>
          ${this.bigBtn("cycle", "更多", { drop: true })}
        </div>
        <div class="gname"><span>同步建模</span><i class="caret small"></i></div>
      </div>
      <i class="caret small tail"></i>
    </section>
    <section class="selbar" aria-label="选择条">
      <button class="menu">${ico(12, svg`<path stroke="#222" d="M1 1.500h10M1 5.500h10M1 9.500h10"/>`)}<span>菜单(<u>M</u>)</span><i class="caret small"></i></button>
      <i class="split"></i>
      <div class="combo c1"><select aria-label="选择过滤器"><option>无选择过滤器</option></select><i class="caret"></i></div>
      <button class="reset" aria-label="重置过滤器">${ico(17, svg`<path stroke="#aaa" d="M1 1h10L8 6v8l-3-2V6zM3 3h6M11 11l2-3v2c4 0 4 4 2 5"/>`)}</button>
      <div class="combo c2"><select aria-label="选择范围"><option>仅在工作部件内</option></select><i class="caret"></i></div>
      <div class="minis">
        ${miniOrder.map(([id, label]) => html`<button aria-label=${label}>${ico(16, mini[id])}</button>`)}
        <i class="caret small"></i>
        <button aria-label="平面">${ico(16, mini.plane)}</button><button aria-label="截面">${ico(16, mini.sect)}</button>
        <i class="split"></i>
      </div>
      <i class="caret small"></i>
    </section>`;
  }

  private renderNode(row: TreeRow, i: number) {
    const dots = row.child
      ? svg`<path d=${i === 7 ? "M28.500 0V10.500H38" : "M28.500 0V20M28.500 10.500H38"}/>`
      : svg`<path d=${i === 0 ? "M9.500 10V20M9.500 10.500H18" : i === 4 ? "M9.500 0V10M10 10.500H18" : "M9.500 0V20M9.500 10.500H18"}/>`;
    return html`<div class=${classMap({ node: true, active: !!row.active })}>
      <svg class="ico" width=${row.child ? 38 : 19} height="20" fill="none" aria-hidden="true">
        <g stroke="#999" stroke-dasharray="1 1">${dots}</g>
        ${row.box ? svg`<path fill="#fff" stroke="#ccc" d="M5.500 6.500h8v8h-8z"/><path stroke="#111" d=${row.box === "+" ? "M7 10.500h5M9.500 8v5" : "M7 10.500h5"}/>` : nothing}
      </svg>
      ${row.child ? eye : nothing}
      ${row.icons.map((n) => (n === "check" ? check : ico(16, treeIcons[n])))}
      <span class="label">${row.text}</span>
      ${row.active ? html`<span class="badge">2</span>` : nothing}
    </div>`;
  }

  private renderPanel() {
    return html`<aside class="panel">
      <div class="phead">${ico(16, part, 24)}<h2>部件导航器</h2><button class="max" aria-label="最大化"></button></div>
      <div class="grid">
        <div class="rows">
          <table>
            <colgroup><col style="width:196px" /><col style="width:39px" /><col style="width:24px" /><col /></colgroup>
            <thead><tr><th>名称 <i class="up"></i></th><th>当...</th><th>最</th><th>附注</th></tr></thead>
            <tbody>
              ${Array.from({ length: 30 }, (_, i) => {
                const r = tree[i];
                return html`<tr><td>${r ? this.renderNode(r, i) : nothing}</td>
                  <td>${r?.active ? html`<div class="cell left">${ico(14, svg`<path stroke="#444" d="M1.500 0v14M1.500 2.500h2M1.500 7.500h2M1.500 12h2M3.500.5h3v3h-3zM3.500 10.500h3v3h-3z"/><path fill="#f08a1d" stroke="#a55304" d="M3.500 5.500h3v3h-3z"/>`)}</div>` : nothing}</td>
                  <td>${r?.done ? html`<div class="cell">${check}</div>` : nothing}</td><td></td></tr>`;
              })}
            </tbody>
          </table>
        </div>
        <div class="hscroll"><div class="thumb"></div></div>
      </div>
      <div class="splitter"></div>
      <section class="search">
        <button class="fold"><i class="tri"></i>搜索</button>
        <div class="line">
          <input class="q" type="text" aria-label="搜索文本" />
          <button class="sq gap4" aria-label="清除">${ico(16, svg`<path stroke="#222" stroke-width="1.500" d="M2 2l12 12M14 2L2 14"/>`)}</button>
          <button class="sq gap4" aria-label="上一个">${ico(16, svg`<path stroke=${INK} d="M8 1l7 7h-4v7H5V8H1z"/>`)}</button>
          <button class="sq gap2" aria-label="下一个">${ico(16, svg`<path stroke=${INK} d="M8 15L1 8h4V1h6v7h4z"/>`)}</button>
          <button class="sq" aria-label="定位">${ico(16, target)}</button>
        </div>
        <div class="line">
          <label class="tick"><input type="checkbox" checked />自动补全</label>
          <button class="sq gap2" aria-label="显示列">${ico(16, svg`<path stroke=${INK} fill="#ddd" d="M0 6c4-6 11-6 15 0-4 5-11 5-15 0z"/><circle cx="7" cy="6" r="3" fill="#444"/><path fill="#fff" stroke=${INK} d="M6 6h9v10H6zM8 9h2M8 13h2M12 9h2M12 13h2"/>`)}</button>
          <button class="sq gap2" aria-label="添加过滤器">${ico(16, svg`<path stroke="#0a5fe0" stroke-width="1.500" d="M3 1v5M0 3.500h6"/><path fill="#f5b52b" d="M5 7h9l-3 4v4l-3-1v-3z"/>`)}</button>
          <span class="gap2">无匹配</span>
          <button class="sq" aria-label="匹配">${ico(16, svg`<path stroke="#ee7d11" stroke-width="1.500" d="M4 1H1v14h3M12 1h3v14h-3"/><g stroke=${INK}><circle cx="8" cy="8" r="3"/><path d="M8 3v10M3 8h10"/></g>`)}</button>
        </div>
      </section>
      ${["相关性", "细节", "预览"].map((t) => html`<button class="fold more"><i class="tri side"></i>${t}</button>`)}
    </aside>`;
  }

  private renderModel() {
    const E = "#2d2a20";
    const tan = "#8f7f5e";
    const holes: [number, number, number, number][] = [
      [604, 370, 29, 21], [850, 480, 29, 20], [460, 540, 26, 17], [708, 647, 29, 20], [388, 663, 42, 30],
      [1040, 492, 26, 17], [1114, 525, 25, 18], [904, 622, 25, 17], [980, 655, 25, 17],
    ];
    return html`<svg class="model" width="430" height="410" viewBox="0 0 1290 1230" fill="none" role="img" aria-label="模型">
      <defs>
        <linearGradient id="patch" x1="0" y1="0" x2="1" y2="1"><stop offset="0" stop-color="#a3927a"/><stop offset=".5" stop-color="#dccfb4"/><stop offset="1" stop-color="#94855f"/></linearGradient>
        <linearGradient id="front" x1="0" y1="0" x2="1" y2="0.300"><stop offset=".25" stop-color="#6b6b6b"/><stop offset=".45" stop-color="#7c6d57"/></linearGradient>
        <linearGradient id="side" x1="0" y1="0" x2="1" y2="0"><stop offset="0" stop-color="#7c6d57"/><stop offset=".22" stop-color="#737373"/></linearGradient>
        <linearGradient id="bore" x1="0" y1="0" x2="1" y2="0"><stop offset="0" stop-color="#6d6148"/><stop offset=".5" stop-color="#a8976f"/><stop offset="1" stop-color="#736748"/></linearGradient>
        <linearGradient id="rim" x1="0" y1="0" x2="1" y2="1"><stop offset="0" stop-color="#8a7b5b"/><stop offset=".5" stop-color="#c0af8c"/><stop offset="1" stop-color="#8a7b5b"/></linearGradient>
        <radialGradient id="sphere" cx=".42" cy=".4" r=".65"><stop offset="0" stop-color="#e0d2b4"/><stop offset=".6" stop-color="#a08f6c"/><stop offset="1" stop-color="#665a42"/></radialGradient>
      </defs>
      <polygon fill="#f4d8a6" points="503,52 1240,381 1220,683 792,1183 55,855 78,550"/>
      <path fill="#eacba6" d="M1225 570l-40 58 35 20zM65 740l45 15-50 60z"/>
      <g stroke=${E} stroke-width="3">
        <polygon fill="#f37400" points="60,815 110,755 600,860 1185,628 1218,645 795,1143"/>
        <polygon fill="#7b6c59" points="60,815 795,1143 790,1182 56,860"/>
        <polygon fill="#737373" points="795,1143 1218,645 1216,683 790,1182"/>
        <polygon fill="#685b49" points="172,785 180,800 765,1060 785,1050"/>
        <polygon fill="url(#front)" points="75,632 295,735 303,692 817,922 803,1064 65,738"/>
        <polygon fill="url(#side)" points="817,922 992,706 1194,520 1228,523 1225,570 803,1064"/>
        <polygon fill="#86d800" stroke="none" points="1162,494 1228,523 1195,567 1192,520"/>
        <polygon fill="#2456c8" points="75,632 201,484 262,500 235,566 265,600 340,660 303,692 295,735"/>
        <polygon fill="#3462cc" stroke="none" points="130,572 201,484 262,500 235,566 265,626 250,625"/>
        <polygon fill=${tan} points="201,443 272,475 258,503 203,482"/>
        <polygon fill=${tan} points="237,530 305,560 295,587 232,567"/>
        <polygon fill=${tan} points="265,610 338,642 325,672 263,650"/>
        <path fill="#3323c8" d="M460 140C560 152 670 188 768 228L928 298l120 65-220 265 164 78-175 216L303 692l35-50-73-32 40-50-68-30 35-55-71-32z"/>
        <polygon fill="#2015c4" stroke="none" points="330,668 840,885 817,922 303,692"/>
        <polygon fill="#93825f" points="1048,365 1048,423 828,628"/>
        <polygon fill="#bca987" points="1048,423 1192,518 992,706 828,628"/>
        <path fill="#8d7c5c" d="M690 325l238-27-2 25-88 100-175-78z"/>
        <path fill="url(#patch)" d="M768 228c60 0 110 22 160 70-40 30-60 70-90 103l-152-72c30-32 48-72 82-101z"/>
        <path fill=${tan} d="M495 181l70 32-85 100-72-31zM495 181l-5 43"/>
        <path fill="#3462cc" d="M490 224l47 21-10 13-32-14-46 52-15-7z"/>
        <path fill="#7d6e51" d="M497 245l30 14-40 50-38-14z"/>
        <path fill="#7bea1f" d="M475 308l25-22v13l-12 16z"/>
      </g>
      <g stroke=${E} stroke-width="2">
        <ellipse cx="362" cy="376" rx="66" ry="42" transform="rotate(-40 362 376)" fill="url(#bore)"/>
        <path fill="#3462cc" d="M311 423c10-32 60-63 98-59 0 20-30 55-66 62-18 4-28 2-32-3z"/>
      </g>
      <g stroke-linecap="round">
        <path stroke=${E} stroke-width="56" d="M490 373l-85 84"/><path stroke="#8f7f5e" stroke-width="52" d="M490 373l-85 84"/>
        <path stroke="#3462cc" stroke-width="22" d="M484 400l-66 68"/>
      </g>
      <g stroke=${E} stroke-width="2">${holes.map(([x, y, a, b]) => svg`<ellipse cx=${x} cy=${y} rx=${a} ry=${b} fill="url(#bore)"/><path d="M${x + 4} ${y - b}v${2 * b}"/>`)}</g>
      <path stroke="#3462cc" stroke-width="5" d="M355 684c20 9 36 9 50 4"/>
      <g stroke=${E} stroke-width="2">
        <ellipse cx="658" cy="507" rx="162" ry="116" fill="url(#rim)"/>
        <ellipse cx="656" cy="502" rx="142" ry="102" fill="#8d7d5a"/>
        <path fill="#33ecca" d="M517 530c10-75 260-75 275 0-5 90-255 105-275 0z"/>
        <path fill="url(#bore)" d="M568 560c0-68 168-68 168 0 0 65-168 65-168 0z"/>
        <path fill="#f8ee00" d="M584 594c30-32 110-32 138 0-20 26-110 30-138 0z"/>
        <circle cx="543" cy="637" r="42" fill="url(#sphere)" stroke="none"/><path d="M550 597l-8 14"/>
        <ellipse cx="490" cy="708" rx="38" ry="30" fill="url(#sphere)"/><path d="M508 682l-20 54"/>
        <path fill="url(#bore)" d="M643 700l-37 42c0 50 113 50 113 0l-29-42z"/>
        <ellipse cx="666" cy="701" rx="23" ry="17" fill="#8a20cf"/>
        <path fill="url(#bore)" d="M754 790v25c5 42 108 42 113 0v-25z"/>
        <ellipse cx="810" cy="779" rx="57" ry="43" fill="url(#sphere)"/>
        <ellipse cx="813" cy="767" rx="34" ry="23" fill="#7a08ea"/><path d="M846 762l12 17M785 818v26"/>
      </g>
      <g stroke="#222" stroke-width="3" stroke-dasharray="6 2">
        <path d="M78 550L503 52l737 329-423 504zM503 52l-6 96M1240 381l-20 302M78 550L55 855"/>
      </g>
      <path stroke="#e4e4e4" stroke-width="4" d="M815 905l-22 260"/>
      <g stroke="#168" stroke-width="3"><path d="M553 420v-50l95 38 75-60v58"/></g>
      <path stroke="#ddd" stroke-width="3" d="M555 440l60-52"/>
      <path stroke="#ff8c35" stroke-width="9" d="M498 437l160 68M658 505l88-100"/>
      <g stroke="#a4a4a4" stroke-width="11" stroke-linecap="round">
        <path d="M400 505l248 110 150-170M648 612l15-180M462 535c5-55 25-85 65-87M465 525c50-65 180-75 290-35M527 450c60-5 130 15 230 38M755 490c0-40-5-70-22-70-35 10-55 20-72 38"/>
      </g>
      <g stroke="#ececec" stroke-width="5"><path d="M400 503l248 110 150-170M646 610l15-178M461 535c5-55 25-85 65-88M465 523c50-65 180-75 290-35M527 449c60-5 130 15 230 37M753 490c0-40-5-68-20-69-35 10-55 20-72 38"/></g>
      <g fill="url(#gold)" stroke="#8a6d15" stroke-width="1">
        <path d="M328 478c26 3 52 8 78 14 3 10-4 28-12 32zM831 403l-50 33c2 18 18 28 36 27zM667 355l-19 66c8 8 28 8 38 0z"/>
        <circle cx="525" cy="450" r="12"/><circle cx="591" cy="468" r="12"/><circle cx="733" cy="419" r="12"/>
      </g>
      <g fill="#a7996a" stroke="#6d6240" stroke-width="1">
        <path d="M233 433l52 6-12 28zM884 340l-10 36-28-4 2-18zM409 900l14-38 23 6zM1060 802l-48-10 4-20 14-2zM632 806l-10-42h28zM658 425l-14 52 30-2z"/>
      </g>
      <path fill="#ddd" d="M443 410l44 12-10 12zM782 362l-28 12 10 14z"/>
      <path stroke="#ddd" stroke-width="3" d="M480 426l24 12M760 380l-16 20"/>
      <g font-family="Noto Sans, sans-serif" font-size="36">
        <text x="410" y="412" fill="#ddd">Y</text><text x="780" y="362" fill="#ddd">X</text>
        <text x="660" y="330" fill="#168a8a">Z</text><text x="636" y="348" fill="#1650f0" font-size="42">ZC</text>
        <text x="262" y="478" fill="#2aa052" font-size="42">YC</text><text x="814" y="398" fill="#d8303a" font-size="42">XC</text>
      </g>
      <path fill="#0b7a55" d="M668 342l-8 28h18z"/>
      <g stroke="#a86a3c" stroke-width="4">
        <path d="M40 845l28 26M68 845l-28 26M54 842v30M803 872l28 26M831 872l-28 26M1205 672l26 24M1231 672l-26 24M777 1170l28 28M805 1170l-28 28M791 1165v36"/>
        <circle cx="803" cy="1035" r="15"/><path d="M803 1022v26"/><circle cx="1003" cy="935" r="15"/><circle cx="72" cy="865" r="6"/><circle cx="814" cy="902" r="6"/><circle cx="1204" cy="700" r="6"/>
      </g>
    </svg>
    <svg class="triad" width="180" height="140" viewBox="0 0 540 420" fill="none" role="img" aria-label="方位">
      <path fill="#fff" stroke="#999" stroke-width="3" d="M105 42l140 38-31 124L73 166zM226 73l-31 124"/>
      <path fill="#0a36e8" d="M113 112l20-16 20 10 5 14-22 10-18-8z"/><path stroke="#8090ff" stroke-width="3" d="M114 96h18"/>
      <path fill="#2a932f" stroke="#1b6d20" d="M220 133l92 20 3-7 53 31-60 1 2-10-92-22z"/>
      <path fill="#c93535" stroke="#8f2020" d="M136 183l15 3-22 92 5 3-27 54-3-58 8-1z"/>
      <g font-family="Noto Sans, sans-serif" font-size="36"><text x="386" y="196" fill="#2a932f">Y</text><text x="87" y="376" fill="#d23c3c">X</text></g>
    </svg>`;
  }

  private comboRow(id: string, label: string, value: string) {
    return html`<div class="row"><label class="name" for=${id}>${label}</label>
      <div class="combo"><select id=${id}><option>${value}</option></select><i class="caret"></i></div></div>`;
  }

  private renderDialog() {
    return html`<section class="dialog" role="dialog" aria-label="包容体">
      <div class="dtitle">
        ${ico(14, svg`<circle cx="8" cy="8" r="4.500" stroke="#fff" stroke-width="2"/><path stroke="#fff" stroke-width="3" d="M8 0v3M8 13v3M0 8h3M13 8h3M2 2l2 2M12 12l2 2M14 2l-2 2M2 14l2-2"/><circle cx="8" cy="8" r="1.500" fill="#fff"/>`, 16)}
        <h2>包容体</h2>
        <button aria-label="重置">${ico(13, svg`<path stroke="#fff" stroke-width="2" d="M9 2c5 3 3 10-3 10C0 12-1 5 4 3M1 1v0l4 1-1 4"/>`)}</button>
        <button aria-label="帮助"><b>?</b></button>
        <button aria-label="关闭">${ico(12, svg`<path stroke="#fff" stroke-width="2" d="M1 1l10 10M11 1L1 11"/>`)}</button>
      </div>
      <div class="dbody">
        <div class="sec top"><div class="combo kind">
          <select aria-label="类型"><option>块</option></select>
          ${ico(16, svg`<path stroke="#444" fill="#fff" d="M.5.5h15v15H.5z"/><path fill="#f08a1d" stroke="#a55304" d="M5.500 5.500h5v5h-5z"/>`)}<i class="caret"></i></div></div>
        <div class="sec pad"><h3><button><i class="tri"></i>对象</button></h3>
          <div class="row pick"><span class="what">${check}选择对象 (1768)</span>
            <button class="sq sm" aria-label="点构造">${ico(16, svg`<circle cx="5" cy="4" r="2" fill="#e07008"/><path stroke="#222" stroke-width="2" stroke-dasharray="2 4" d="M2 14h14"/>`)}</button>
            <button class="sq" aria-label="选择对象">${ico(22, target, 16)}</button></div></div>
        <div class="sec pad"><h3><button><i class="tri"></i>方位</button></h3>
          ${this.comboRow("align", "对齐类型", "坐标系")}
          <div class="row rel"><label class="name" for="ref">参考</label>
            <div class="combo focus"><select id="ref"><option>选定坐标系</option></select><i class="caret"></i></div><span class="badge b1">1</span></div>
          <div class="row pick hot"><span class="what">${check}选择坐标系 (1)</span><button class="sq" aria-label="选择坐标系">${ico(22, target, 16)}</button></div>
          <div class="row pick"><span class="what">${check}指定方位</span>
            <button class="sq" aria-label="指定方位">${ico(24, svg`<path stroke="#22a7cf" stroke-width="1.500" d="M3 1v14"/><path stroke="#2a932f" stroke-width="1.500" d="M3 15l12-7"/><path stroke="#e8303a" stroke-width="1.500" d="M3 15l12 7"/><path stroke="#444" stroke-width="1.500" d="M6 1h4l-4 5h4M16 6l2 3 2-3M18 9v2M17 19l4 5M21 19l-4 5"/>`)}</button></div></div>
        <div class="sec pad"><h3><button><i class="tri"></i>参数</button></h3>
          <div class="row chk"><label class="tick"><input type="checkbox" checked />均匀偏置</label></div>
          <div class="row"><label class="name" for="off">偏置</label>
            <div class="combo"><div class="inner"><input id="off" type="text" value="0" /><span>mm</span></div><i class="caret"></i></div></div>
          ${this.comboRow("size", "大小舍入", "0")}${this.comboRow("pos", "位置舍入", "0")}</div>
        <div class="sec"><h3 class="shut"><button><i class="tri side"></i>设置</button></h3></div>
        <div class="foot"><label class="tick"><input type="checkbox" checked />预览</label><span>显示结果</span><button class="sq clear" aria-label="显示结果">${ico(18, lens, 23)}</button></div>
        <button class="fold-up" aria-label="收起"><i class="up"></i></button>
        <div class="actions"><button class="ok">&lt; 确定 &gt;</button><button>应用</button><button>取消</button></div>
      </div>
    </section>`;
  }

  private renderIme() {
    const b = "#0a6ed1";
    return html`<div class="ime">
      <svg class="ico logo" width="32" height="32" viewBox="0 0 32 32" fill="none" aria-hidden="true"><path fill="#f4511e" d="M2 7q-2-3 2-4L24 0q3 0 4 3l4 21q0 4-3 5L8 31q-4 0-4-3z"/><path stroke="#fff" stroke-width="4" stroke-linecap="round" d="M25 7C15 5 8 8 8 11c0 5 19 3 18 9-1 4-10 6-17 4"/></svg>
      <b>英</b>
      ${ico(14, svg`<circle cx="3" cy="4" r="2" fill=${b}/><path fill=${b} d="M8 7h4c0 4-1 6-4 6l1-2H8z"/>`)}
      ${ico(15, svg`<rect x="5" y="0" width="6" height="10" rx="3" fill=${b}/><path stroke=${b} stroke-width="2" d="M2 7c0 8 12 8 12 0M8 13v3"/>`, 16)}
      ${ico(15, svg`<rect x="1" y="2" width="14" height="12" rx="1" stroke=${b} stroke-width="2"/><path stroke=${b} stroke-width="1.500" stroke-dasharray="2 1" d="M3 6h10M3 8.500h10M5 11.500h6"/>`, 16)}
      ${ico(16, svg`<path fill="url(#shirt)" d="M4 4l3 1h3l3-1 3 3-2 3h-1v6H4v-6H2L0 7z"/><circle cx="15" cy="0" r="3" fill="#fa5230"/>`, 16)}
      ${ico(14, svg`<path fill=${b} d="M1 2q0-1 1-1h5v6H1zM9 9h6v5q0 1-1 1H9zM1 9h6v6H2q-1 0-1-1z"/><path stroke=${b} stroke-width="2" d="M10 2h4v4h-4z"/>`, 16)}
      ${ico(20, svg`<circle cx="10" cy="11" r="9" fill="#f6f0ee" stroke="#e3dcda"/><path fill="#e8742a" d="M2 7l12-1v5l-11 3z"/><path fill="#222" d="M3 9h5v4H3z"/><path fill="#ffd84a" d="M18 4l1 3 2 1-2 1-1 3-1-3-2-1 2-1z"/>`)}
    </div>`;
  }

  render() {
    return html`<div class="app">
      <svg class="defs" aria-hidden="true"><defs>
        <linearGradient id="orange" x1="0" y1="0" x2="1" y2="1"><stop offset="0" stop-color="#fba332"/><stop offset="1" stop-color="#dd6a08"/></linearGradient>
        <linearGradient id="grey" x1="0" y1="0" x2="1" y2="0"><stop offset="0" stop-color="#e9e9e9"/><stop offset="1" stop-color="#a8a8a8"/></linearGradient>
        <linearGradient id="gold" x1="0" y1="0" x2="1" y2="1"><stop offset="0" stop-color="#f7dc6a"/><stop offset="1" stop-color="#b48c1a"/></linearGradient>
        <linearGradient id="shirt" x1="0" y1="0" x2="1" y2="1"><stop offset="0" stop-color="#fb5a6d"/><stop offset=".5" stop-color="#a07bff"/><stop offset="1" stop-color="#3ec6ff"/></linearGradient>
        <radialGradient id="ball" cx=".35" cy=".3" r=".8"><stop offset="0" stop-color="#c8ffd0"/><stop offset=".5" stop-color="#20d83c"/><stop offset="1" stop-color="#0c8a20"/></radialGradient>
      </defs></svg>
      ${this.renderBanner()}${this.renderRibbon()}
      <main class="work">
        <nav class="rail" aria-label="资源条">
          <button class="gear" aria-label="设置">${ico(16, svg`<g stroke="#444"><circle cx="8" cy="8" r="2.500"/><path d="M7 .5h2l.5 2 2 1 2-1 1.500 1.500-1 2 1 2v2l-2 .5-.5 1.500 1 2-1.500 1.500-2-1-1 2H7l-1-2-2 .5L2.500 13l.5-2-1.500-1.500v-2l1-1.500-.5-2L3.500 2.500l2 .5z"/></g>`)}</button>
          ${rail.map((r) => html`<button class=${classMap({ on: !!r.on })} aria-label=${r.label}>${ico(24, r.art)}</button>`)}
        </nav>
        ${this.renderPanel()}
        <section class="stage">
          <div class="tabs"><div class="tab">${ico(14, part, 24)}<span>山涧果子.prt</span>
            ${ico(11, svg`<path stroke="#fff" stroke-width="1.500" d="M9 4V1H1v10h7M6 7h5M9 5l2 2-3 4"/>`, 12)}
            <button aria-label="关闭标签">${ico(9, svg`<path stroke="#b9cfd9" stroke-width="2" d="M1 1l8 8M9 1L1 9"/>`, 10)}</button></div></div>
          <div class="canvas">
            ${this.renderModel()}
            <div class="dim d1"><input aria-label="长度" value="300.0000 mm" /></div>
            <div class="dim d2"><input aria-label="高度" value="150.0000 mm" /></div>
            <div class="dim d3"><input aria-label="宽度" value="300.0000 mm" /></div>
            <span class="badge b3">3</span>
            ${this.renderDialog()}${this.renderIme()}
          </div>
        </section>
      </main>
      <footer class="status"><span class="msg">选择现有坐标系</span><button>${ico(14, bell, 24)}1 通知</button></footer>
      <div class="mark">CSDN @山涧果子</div>
    </div>`;
  }
}
